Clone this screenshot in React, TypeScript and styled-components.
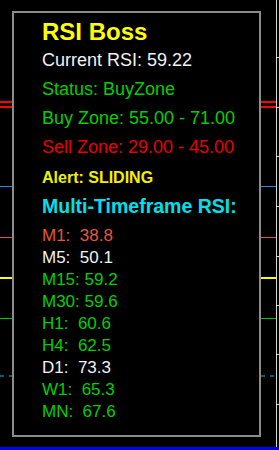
import styled, { createGlobalStyle } from 'styled-components';

const GlobalStyle = createGlobalStyle`
  html, body {
    margin: 0;
    padding: 0;
    background: #000;
  }
`;

const levels = [
  { y: 101, h: 2, color: '#ff0000' },
  { y: 106, h: 2, color: '#ff0000' },
  { y: 186, h: 1, color: '#2f86e0' },
  { y: 237, h: 1, color: '#e0583f' },
  { y: 277, h: 2, color: '#ffff00' },
  { y: 318, h: 1, color: '#00c800' },
];

const ticks = [57, 107, 156, 206, 256, 305, 354, 404];

const timeframes = [
  { text: 'M1:  38.8', color: '#e5573e' },
  { text: 'M5:  50.1', color: '#f2f2f2' },
  { text: 'M15: 59.2', color: '#00d000' },
  { text: 'M30: 59.6', color: '#00d000' },
  { text: 'H1:  60.6', color: '#00d000' },
  { text: 'H4:  62.5', color: '#00d000' },
  { text: 'D1:  73.3', color: '#f2f2f2' },
  { text: 'W1:  65.3', color: '#00d000' },
  { text: 'MN:  67.6', color: '#00d000' },
];

const App = () => {
  return (
    <>
      <GlobalStyle />
      <Chart>
        <ChartDrawing width="279" height="450">
          {levels.map((l, i) => (
            <rect key={i} x="0" y={l.y} width="276" height={l.h} fill={l.color} />
          ))}
          <line x1="0" y1="376" x2="276" y2="376" stroke="#00c8d8" strokeWidth="1" strokeDasharray="4 5" />
          <rect x="276" y="0" width="1" height="447" fill="#d8d8d8" />
          {ticks.map((t) => (
            <rect key={t} x="277" y={t} width="2" height="1" fill="#d8d8d8" />
          ))}
          <rect x="0" y="447" width="279" height="3" fill="#0000ff" />
        </ChartDrawing>

        <Panel>
          <Title>RSI Boss</Title>
          <InfoLine $color="#f2f2f2">Current RSI: 59.22</InfoLine>
          <InfoLine $color="#00d000">Status: BuyZone</InfoLine>
          <InfoLine $color="#00d000">Buy Zone: 55.00 - 71.00</InfoLine>
          <InfoLine $color="#e80000">Sell Zone: 29.00 - 45.00</InfoLine>
          <AlertLine>Alert: SLIDING</AlertLine>
          <SectionTitle>Multi-Timeframe RSI:</SectionTitle>
          <TfList>
            {timeframes.map((tf) => (
              <TfRow key={tf.text} $color={tf.color}>{tf.text}</TfRow>
            ))}
          </TfList>
        </Panel>
      </Chart>
    </>
  );
};

const Chart = styled.div`
  position: relative;
  width: 279px;
  height: 450px;
  background: #000;
  overflow: hidden;
  padding: 11px 0 0 12px;
  box-sizing: border-box;
  font-family: "Liberation Sans", Arial, sans-serif;
`;

const ChartDrawing = styled.svg`
  position: absolute;
  top: 0;
  left: 0;
  display: block;
`;

const Panel = styled.div`
  position: relative;
  width: 249px;
  height: 426px;
  box-sizing: border-box;
  border: 2px solid #8c8c8c;
  background: #000;
  padding: 5px 0 0 28px;
`;

const Title = styled.div`
  font-size: 24px;
  font-weight: 700;
  line-height: 28px;
  color: #ffff00;
`;

const InfoLine = styled.div<{ $color: string }>`
  font-size: 18px;
  line-height: 29px;
  color: ${(p) => p.$color};
  white-space: nowrap;
`;

const AlertLine = styled.div`
  font-size: 16px;
  font-weight: 700;
  line-height: 31px;
  color: #f0f000;
`;

const SectionTitle = styled.div`
  font-size: 19.5px;
  font-weight: 700;
  line-height: 27px;
  color: #00e0ea;
  white-space: nowrap;
`;

const TfList = styled.div`
  margin-top: 5px;
  display: flex;
  flex-direction: column;
`;

const TfRow = styled.div<{ $color: string }>`
  font-size: 17px;
  line-height: 22px;
  color: ${(p) => p.$color};
  white-space: pre;
`;

export default App;
